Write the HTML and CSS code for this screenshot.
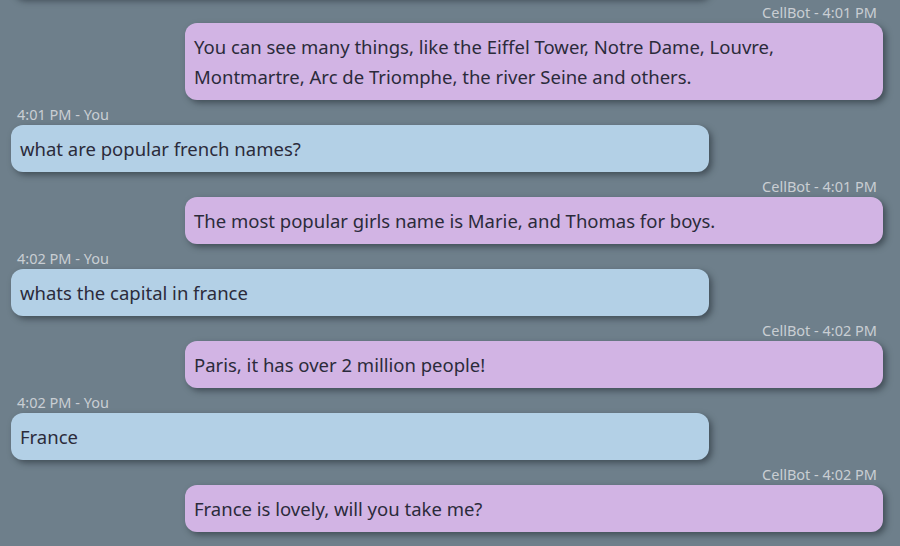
FILE: index.html
```html
<!DOCTYPE html>
<html>
<head>
<meta charset="utf-8">
<link rel="stylesheet" href="styles.css">
</head>
<body>
<div class="chat">
  <div class="msg user">
    <div class="meta">4:01 PM - You</div>
    <div class="bubble">what are the sights in paris?</div>
  </div>
  <div class="msg bot">
    <div class="meta">CellBot - 4:01 PM</div>
    <div class="bubble">You can see many things, like the Eiffel Tower, Notre Dame, Louvre, Montmartre, Arc de Triomphe, the river Seine and others.</div>
  </div>
  <div class="msg user">
    <div class="meta">4:01 PM - You</div>
    <div class="bubble">what are popular french names?</div>
  </div>
  <div class="msg bot">
    <div class="meta">CellBot - 4:01 PM</div>
    <div class="bubble">The most popular girls name is Marie, and Thomas for boys.</div>
  </div>
  <div class="msg user">
    <div class="meta">4:02 PM - You</div>
    <div class="bubble">whats the capital in france</div>
  </div>
  <div class="msg bot">
    <div class="meta">CellBot - 4:02 PM</div>
    <div class="bubble">Paris, it has over 2 million people!</div>
  </div>
  <div class="msg user">
    <div class="meta">4:02 PM - You</div>
    <div class="bubble">France</div>
  </div>
  <div class="msg bot">
    <div class="meta">CellBot - 4:02 PM</div>
    <div class="bubble">France is lovely, will you take me?</div>
  </div>
</div>
</body>
</html>
```

FILE: styles.css
```css
html, body {
  margin: 0;
  padding: 0;
  height: 100%;
  overflow: hidden;
  background: #6e7f8b;
  font-family: "Noto Sans", "Open Sans", sans-serif;
}
.chat {
  height: 100vh;
  box-sizing: border-box;
  display: flex;
  flex-direction: column;
  justify-content: flex-end;
  padding: 0 17px 14px 11px;
}
.msg {
  width: 698px;
  display: flex;
  flex-direction: column;
  margin-top: 5px;
  flex-shrink: 0;
}
.msg.user { align-self: flex-start; }
.msg.bot { align-self: flex-end; }
.meta {
  font-size: 14.5px;
  line-height: 18px;
  color: #c9ced3;
  margin-bottom: 2px;
  padding: 0 6px;
}
.bot .meta { text-align: right; }
.bubble {
  font-size: 18.5px;
  line-height: 30px;
  color: #2b2b3b;
  padding: 9px 9px 8px;
  border-radius: 12px;
  box-shadow: 3px 3px 6px rgba(30, 38, 46, 0.55);
}
.user .bubble { background: #b3d0e6; }
.bot .bubble { background: #d2b4e4; }
```
